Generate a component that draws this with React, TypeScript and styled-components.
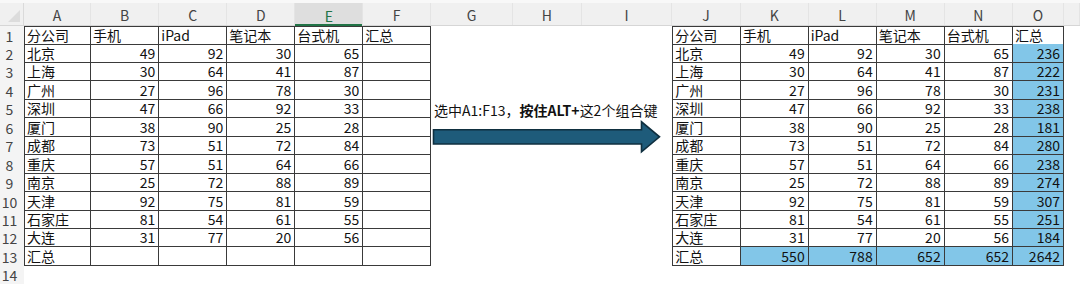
import styled, { createGlobalStyle } from "styled-components";

const COLS =
  "24px 67px 68.3px 68px 68px 68px 67.7px 82px 68.7px 90.6px 68.4px 68px 68px 68px 68.3px 51px 1fr";

const LETTERS = ["A", "B", "C", "D", "E", "F", "G", "H", "I", "J", "K", "L", "M", "N", "O"];
const HEAD = ["分公司", "手机", "iPad", "笔记本", "台式机", "汇总"];

const DATA: [string, number, number, number, number][] = [
  ["北京", 49, 92, 30, 65],
  ["上海", 30, 64, 41, 87],
  ["广州", 27, 96, 78, 30],
  ["深圳", 47, 66, 92, 33],
  ["厦门", 38, 90, 25, 28],
  ["成都", 73, 51, 72, 84],
  ["重庆", 57, 51, 64, 66],
  ["南京", 25, 72, 88, 89],
  ["天津", 92, 75, 81, 59],
  ["石家庄", 81, 54, 61, 55],
  ["大连", 31, 77, 20, 56],
];

type CellData = { text: string; num?: boolean; fill?: boolean };

// builds the 13 rows of one table; filled = with the 汇总 results
function buildTable(filled: boolean): CellData[][] {
  const rows: CellData[][] = [HEAD.map((h) => ({ text: h }))];
  DATA.forEach(([city, ...vals]) => {
    const sum = vals.reduce((a, b) => a + b, 0);
    rows.push([
      { text: city },
      ...vals.map((v) => ({ text: String(v), num: true })),
      filled ? { text: String(sum), num: true, fill: true } : { text: "" },
    ]);
  });
  const totals = [0, 1, 2, 3].map((i) => DATA.reduce((a, r) => a + r[i + 1], 0));
  const grand = totals.reduce((a, b) => a + b, 0);
  rows.push([
    { text: "汇总" },
    ...totals.map((t) =>
      filled ? { text: String(t), num: true, fill: true } : { text: "" }
    ),
    filled ? { text: String(grand), num: true, fill: true } : { text: "" },
  ]);
  return rows;
}

const LEFT = buildTable(false);
const RIGHT = buildTable(true);

function cellAt(row: number, col: number): { data?: CellData; top: boolean; left: boolean } {
  if (row > 13) return { top: false, left: false };
  if (col <= 5) return { data: LEFT[row - 1][col], top: row === 1, left: col === 0 };
  if (col >= 9) return { data: RIGHT[row - 1][col - 9], top: row === 1, left: col === 9 };
  return { top: false, left: false };
}

export default function App() {
  const rows = Array.from({ length: 14 }, (_, i) => i + 1);
  return (
    <>
      <GlobalStyle />
      <Sheet>
        <HeaderRow>
          <Corner />
          {LETTERS.map((l) => (
            <ColHeader key={l} $active={l === "E"}>
              {l}
            </ColHeader>
          ))}
          <ColHeader $active={false} />
        </HeaderRow>
        {rows.map((r) => (
          <Row key={r}>
            <RowHeader>{r}</RowHeader>
            {LETTERS.map((_, c) => {
              const { data, top, left } = cellAt(r, c);
              return (
                <Cell
                  key={c}
                  $table={!!data}
                  $top={top}
                  $left={left}
                  $num={!!data?.num}
                  $fill={!!data?.fill}>
                  {data?.text}
                </Cell>
              );
            })}
            <Cell $table={false} $top={false} $left={false} $num={false} $fill={false} />
          </Row>
        ))}

        <Caption>
          选中A1:F13，<b>按住ALT+</b>这2个组合键
        </Caption>
        <Arrow width="232" height="36" viewBox="0 0 232 36">
          <path
            d="M1.5 9.8 H209.5 V1.8 L227.5 16.8 L209.5 31.8 V24 H1.5 Z"
            fill="#1e5b7a"
            stroke="#0f2f3f"
            strokeWidth="1.6"
            strokeLinejoin="miter"
          />
        </Arrow>
      </Sheet>
    </>
  );
}

const GlobalStyle = createGlobalStyle`
  body {
    margin: 0;
    background: #ffffff;
    font-family: "Noto Sans CJK SC", "Noto Sans", sans-serif;
  }
`;

const Sheet = styled.div`
  position: relative;
  width: 1080px;
  height: 286px;
  overflow: hidden;
  background: #ffffff;
`;

const HeaderRow = styled.div`
  display: grid;
  grid-template-columns: ${COLS};
  height: 26px;
  background: #f0f0f0;
  border-top: 3px solid #f8f8f8;
  box-sizing: border-box;
  border-bottom: 1px solid #d6d6d6;
`;

const Corner = styled.div`
  position: relative;
  border-right: 1px solid #dadada;

  &::after {
    content: "";
    position: absolute;
    right: 3px;
    bottom: 3px;
    border-style: solid;
    border-width: 0 0 12px 12px;
    border-color: transparent transparent #dcdcdc transparent;
  }
`;

const ColHeader = styled.div<{ $active: boolean }>`
  display: flex;
  align-items: center;
  justify-content: center;
  padding-top: 2px;
  font-size: 14px;
  line-height: 16px;
  color: ${(p) => (p.$active ? "#217346" : "#444444")};
  background: ${(p) => (p.$active ? "#dedede" : "transparent")};
  border-right: 1px solid #e4e4e4;
  box-shadow: ${(p) => (p.$active ? "inset 0 -2px 0 #217346" : "none")};
  margin-bottom: ${(p) => (p.$active ? "-1px" : "0")};
`;

const Row = styled.div`
  display: grid;
  grid-template-columns: ${COLS};
  height: 18.46px;
`;

const RowHeader = styled.div`
  display: flex;
  align-items: flex-end;
  justify-content: center;
  padding: 0 5px 1px 0;
  font-size: 14px;
  line-height: 16px;
  color: #444444;
  background: #f4f4f4;
`;

const Cell = styled.div<{
  $table: boolean;
  $top: boolean;
  $left: boolean;
  $num: boolean;
  $fill: boolean;
}>`
  box-sizing: border-box;
  display: flex;
  align-items: flex-end;
  justify-content: ${(p) => (p.$num ? "flex-end" : "flex-start")};
  padding: 0 ${(p) => (p.$num ? "3px" : "0")} 1px ${(p) => (p.$num ? "0" : "2px")};
  font-size: 14px;
  line-height: 16px;
  color: #111111;
  white-space: nowrap;
  background: ${(p) => (p.$fill ? "#82c6e8" : "transparent")};
  border-right: ${(p) => (p.$table ? "1px solid #3a3a3a" : "none")};
  border-bottom: ${(p) => (p.$table ? "1px solid #3a3a3a" : "none")};
  border-top: ${(p) => (p.$top ? "1px solid #3a3a3a" : "none")};
  border-left: ${(p) => (p.$left ? "1px solid #3a3a3a" : "none")};
`;

const Caption = styled.div`
  position: absolute;
  left: 434px;
  top: 102px;
  font-size: 14px;
  line-height: 16px;
  color: #111111;
  white-space: nowrap;

  b {
    font-weight: 700;
  }
`;

const Arrow = styled.svg`
  position: absolute;
  left: 432px;
  top: 120px;
`;
